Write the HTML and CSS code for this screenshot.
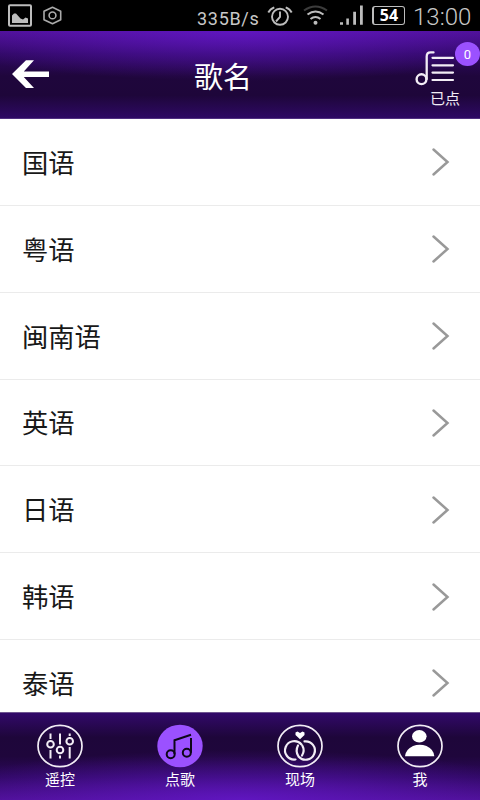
FILE: index.html
```html
<!DOCTYPE html>
<html lang="zh-CN">
<head>
<meta charset="utf-8">
<title>歌名</title>
<link rel="stylesheet" href="styles.css">
</head>
<body>
<div class="app">
  <div class="status">
    <svg class="notices" width="70" height="31" viewBox="0 0 70 31">
      <rect x="9" y="5.2" width="22" height="20.6" rx="1" fill="none" stroke="#bdbdbd" stroke-width="2"/>
      <path d="M12 23V15.500l2-2h2l4.500 5 2.500 1 2.500-2 2.500 1V23z" fill="#bdbdbd"/>
      <path d="M52.500 7.200L60.700 11.300V19.700L52.500 23.800L44 19.700V11.300Z" fill="none" stroke="#aaa" stroke-width="1.600" stroke-linejoin="round"/>
      <circle cx="52.500" cy="15.400" r="3.400" fill="none" stroke="#aaa" stroke-width="1.600"/>
    </svg>
    <span class="speed">335B/s</span>
    <svg class="signals" width="102" height="31" viewBox="264 0 102 31">
      <g fill="none" stroke="#bdbdbd" stroke-width="1.900">
        <circle cx="280" cy="16.800" r="8"/>
        <path d="M280 11.500V17L276 21.500M268.300 12.500Q270 9 274.300 7.300M285.700 7.300Q290 9 291.700 12.500"/>
      </g>
      <g fill="none" stroke="#bdbdbd" stroke-width="2">
        <path d="M304 10.500Q315.500 2.500 327 10.500" stroke="#3c3c3c"/>
        <path d="M307.500 14.500Q315.500 8.500 323.500 14.500M310.500 19Q315.500 15 320.500 19"/>
      </g>
      <circle cx="315.500" cy="22.700" r="2" fill="#bdbdbd"/>
      <path d="M340 22.200h3v2.600h-3zM346.300 18.500h2.600v6.300h-2.600zM353.200 11.800h2.800v13h-2.800zM360 5.500h2.800v19.300h-2.800z" fill="#bdbdbd"/>
    </svg>
    <span class="battery">54</span>
    <span class="clock">13:00</span>
  </div>

  <header class="header">
    <svg class="back" width="40" height="88" viewBox="10 31 40 88">
      <path d="M12 74L26 60.300H34L23.800 71.500H49V77H23.800L34 88H26Z" fill="#fff"/>
    </svg>
    <h1 class="title">歌名</h1>
    <div class="queue">
      <svg width="46" height="40" viewBox="412 50 46 40">
        <g fill="none" stroke="#f2edf5" stroke-linecap="round">
          <circle cx="421.500" cy="79.200" r="4.900" stroke-width="2.400"/>
          <path d="M426.700 79V56.500Q426.700 52.400 430.500 52.400H433.500" stroke-width="2.300"/>
          <path d="M432.500 57.800H453M432.500 65.300H453M432.500 72.600H453M432.500 80H453" stroke-width="2.200"/>
        </g>
      </svg>
      <span class="queue-label">已点</span>
      <span class="badge">0</span>
    </div>
  </header>

  <main class="list">
    <div class="row"><span>国语</span><svg class="chevron" width="20" height="30" viewBox="0 0 20 30"><path d="M2.500 2.500L16.500 15L2.500 27.500"/></svg></div>
    <div class="row"><span>粤语</span><svg class="chevron" width="20" height="30" viewBox="0 0 20 30"><path d="M2.500 2.500L16.500 15L2.500 27.500"/></svg></div>
    <div class="row"><span>闽南语</span><svg class="chevron" width="20" height="30" viewBox="0 0 20 30"><path d="M2.500 2.500L16.500 15L2.500 27.500"/></svg></div>
    <div class="row"><span>英语</span><svg class="chevron" width="20" height="30" viewBox="0 0 20 30"><path d="M2.500 2.500L16.500 15L2.500 27.500"/></svg></div>
    <div class="row"><span>日语</span><svg class="chevron" width="20" height="30" viewBox="0 0 20 30"><path d="M2.500 2.500L16.500 15L2.500 27.500"/></svg></div>
    <div class="row"><span>韩语</span><svg class="chevron" width="20" height="30" viewBox="0 0 20 30"><path d="M2.500 2.500L16.500 15L2.500 27.500"/></svg></div>
    <div class="row"><span>泰语</span><svg class="chevron" width="20" height="30" viewBox="0 0 20 30"><path d="M2.500 2.500L16.500 15L2.500 27.500"/></svg></div>
  </main>

  <nav class="tabs">
    <div class="tab">
      <svg width="48" height="44" viewBox="0 0 48 44">
        <g fill="none" stroke="#f2edf5" stroke-width="1.700">
          <ellipse cx="24" cy="22" rx="22" ry="20.700"/>
          <g stroke-width="2">
            <path d="M14.500 9.500V15M14.500 26V34.500M24 9.500V20.500M24 31.500V34.500M33.700 9.500V12M33.700 23V34.500"/>
            <circle cx="14.500" cy="20.300" r="3.300"/><circle cx="24" cy="26" r="3.300"/><circle cx="33.700" cy="17.200" r="3.300"/>
          </g>
        </g>
      </svg>
      <span>遥控</span>
    </div>
    <div class="tab">
      <svg width="48" height="44" viewBox="0 0 48 44">
        <ellipse cx="24" cy="22" rx="22.700" ry="21.300" fill="#9b51ff"/>
        <g fill="none" stroke="#0d0618" stroke-width="2">
          <circle cx="14.700" cy="30.300" r="4"/><circle cx="30.800" cy="28.700" r="4"/>
          <path d="M18.500 30V16.200L35 10.800M35 14V28.700"/>
        </g>
      </svg>
      <span>点歌</span>
    </div>
    <div class="tab">
      <svg width="48" height="44" viewBox="0 0 48 44">
        <g fill="none" stroke="#f2edf5" stroke-width="1.700">
          <ellipse cx="24" cy="22" rx="22" ry="20.700"/>
          <g stroke-width="2.200" stroke-linecap="round">
            <path d="M19.500 35.500A9.300 9.200 0 1 1 25.500 20.500M26.500 22Q29 26.500 26 31.500"/>
            <path d="M28.500 17.400A9.300 9.200 0 1 1 22.500 32.500Q19 27 22 21.500"/>
          </g>
        </g>
        <path d="M24 15.300L19.500 11V8.600L21.500 7.500L24 9L26.500 7.500L28.500 8.600V11Z" fill="#fff"/>
      </svg>
      <span>现场</span>
    </div>
    <div class="tab">
      <svg width="48" height="44" viewBox="0 0 48 44">
        <ellipse cx="24" cy="22" rx="22" ry="20.700" fill="none" stroke="#f2edf5" stroke-width="1.700"/>
        <ellipse cx="23.300" cy="12.300" rx="7.300" ry="6.200" fill="#fff"/>
        <path d="M9 32.300Q9.500 25.500 17 22Q23.500 19.500 30.500 22Q38 25.500 38.300 32.300Z" fill="#fff"/>
      </svg>
      <span>我</span>
    </div>
  </nav>
</div>
</body>
</html>
```
FILE: styles.css
```css
* {
  box-sizing: border-box;
}

body {
  margin: 0;
  font-family: "Noto Sans CJK SC", sans-serif;
}

.app {
  display: flex;
  flex-direction: column;
  width: 480px;
  height: 800px;
  overflow: hidden;
  background: #fff;
}

.status {
  display: flex;
  align-items: center;
  flex: none;
  height: 31px;
  background: #000;
  color: #c8c8c8;
  font-family: Roboto, sans-serif;
}

.speed {
  width: 67px;
  margin: 5px 0 0 127px;
  font-size: 18px;
  letter-spacing: 0.700px;
}

.battery {
  width: 33px;
  height: 19px;
  margin-left: 6px;
  border: 1.500px solid #bdbdbd;
  border-left-width: 2px;
  border-radius: 3px;
  color: #fff;
  font: bold 16px/16px "Noto Sans", sans-serif;
  text-align: center;
}

.clock {
  margin: 2px 0 0 8px;
  font-size: 24px;
  font-weight: 300;
}

.header {
  display: flex;
  flex: none;
  height: 88px;
  padding-left: 10px;
  border-bottom: 1px solid #503080;
  background:
    radial-gradient(ellipse 330px 50px at 50% 0, rgba(104, 24, 212, 0.700), rgba(104, 24, 212, 0)),
    linear-gradient(180deg, #4c1090 0%, #2e0860 26%, #1f063c 52%, #1e063a 74%, #2e0964 100%);
}

.title {
  width: 120px;
  margin: 24px 0 0 113px;
  color: #fff;
  font-size: 29px;
  font-weight: 400;
  line-height: 40px;
  text-align: center;
}

.queue {
  position: relative;
  display: flex;
  flex-direction: column;
  width: 68px;
  margin: 19px 0 0 129px;
}

.queue-label {
  margin: -2px 0 0 18px;
  color: #f2edf5;
  font-size: 15px;
  line-height: 20px;
}

.badge {
  position: absolute;
  top: -8px;
  right: 0;
  width: 25px;
  height: 24px;
  border-radius: 50%;
  background: #9b51ff;
  color: #fff;
  font: 13px/25px Roboto, sans-serif;
  text-align: center;
}

.list {
  flex: 1;
  overflow: hidden;
}

.row {
  display: flex;
  align-items: center;
  justify-content: space-between;
  height: 86.850px;
  padding: 0 29px 1px 22px;
  border-bottom: 1px solid #ebebeb;
  color: #181818;
  font-size: 26.300px;
}

.chevron {
  margin-top: 2px;
  fill: none;
  stroke: #999;
  stroke-width: 2.500;
  stroke-linecap: round;
}

.tabs {
  display: grid;
  grid-template-columns: repeat(4, 1fr);
  flex: none;
  height: 88px;
  padding-top: 11px;
  border-top: 1px solid #6e5590;
  background:
    radial-gradient(ellipse 330px 50px at 50% 100%, rgba(104, 24, 212, 0.700), rgba(104, 24, 212, 0)),
    linear-gradient(180deg, #32096a 0%, #1e063a 28%, #1f063c 50%, #2e0860 74%, #4c1090 100%);
}

.tab {
  display: flex;
  flex-direction: column;
  align-items: center;
  color: #fff;
  font-size: 15px;
  line-height: 20px;
}

.tab span {
  margin-top: 1px;
}
```
